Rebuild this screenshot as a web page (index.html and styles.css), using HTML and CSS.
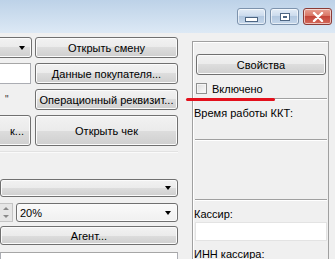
FILE: index.html
```html
<!DOCTYPE html>
<html lang="ru">
<head>
  <meta charset="UTF-8">
  <title>Тест драйвера ККТ</title>
  <link rel="stylesheet" href="styles.css">
</head>
<body>
  <div class="window">
    <!-- заголовок окна -->
    <div class="titlebar">
      <span class="wbtn min"><i></i></span>
      <span class="wbtn max"><i></i></span>
      <span class="wbtn close">
        <svg width="12" height="10" viewBox="0 0 12 10"><path d="M2 1 L10 9 M10 1 L2 9" stroke="#fff" stroke-width="2.4" stroke-linecap="round"/></svg>
      </span>
    </div>

    <div class="client">
      <div class="left">
        <div class="grid">
          <div class="cell"><div class="combo cut"><b class="arrow"></b></div></div>
          <button class="btn">Открыть смену</button>

          <div class="cell"><div class="input cut"></div></div>
          <button class="btn">Данные покупателя...</button>

          <div class="cell note">"</div>
          <button class="btn">Операционный реквизит...</button>

          <div class="cell"><button class="btn cut end">к...</button></div>
          <button class="btn">Открыть чек</button>
        </div>

        <div class="hline"></div>

        <div class="combo first"><b class="arrow"></b></div>
        <div class="row">
          <div class="spin"><b class="up"></b><b class="down"></b></div>
          <div class="combo light">20%<b class="arrow"></b></div>
        </div>
        <button class="btn agent">Агент...</button>
        <div class="input bottom"></div>
      </div>

      <div class="panel">
        <button class="btn props">Свойства</button>
        <label class="check"><span class="box"></span>Включено</label>
        <div class="sep"></div>
        <div class="label">Время работы ККТ:</div>
        <div class="sep gap1"></div>
        <div class="sep gap2"></div>
        <div class="label">Кассир:</div>
        <div class="input field"></div>
        <div class="label">ИНН кассира:</div>
      </div>
    </div>

    <div class="redline"></div>
  </div>
</body>
</html>
```

FILE: styles.css
```css
body {
  margin: 0;
  background: #f0f0f0;
  font-family: "Liberation Sans", Arial, sans-serif;
  font-size: 11px;
  color: #000;
  overflow: hidden;
}

.window {
  position: relative;
  width: 335px;
  height: 259px;
  overflow: hidden;
  background: #f0f0f0;
}

/* заголовок */
.titlebar {
  height: 33px;
  box-sizing: border-box;
  padding: 8px 3px 0 0;
  display: flex;
  justify-content: flex-end;
  gap: 4px;
  background: linear-gradient(#bdd2e8, #d3e2f1 70%, #dde9f5);
}

.wbtn {
  width: 29px;
  height: 17px;
  box-sizing: border-box;
  border: 1px solid #7d93ad;
  border-radius: 3px;
  display: flex;
  justify-content: center;
  align-items: center;
  background: linear-gradient(#e4edf7, #c9d9ec 50%, #b3c8e0 50%, #c4d6ea);
  box-shadow: inset 0 0 0 1px rgba(255,255,255,0.6);
}

.wbtn.min i {
  width: 11px;
  height: 3px;
  margin-top: 5px;
  background: #fff;
  border: 1px solid #4d6582;
}

.wbtn.max i {
  width: 8px;
  height: 6px;
  border: 1px solid #4d6582;
  background: #fff;
  box-shadow: inset 0 0 0 2px #fff, inset 0 0 0 3px #4d6582;
}

.wbtn.close {
  border-color: #8b3b36;
  background: linear-gradient(#e8a194, #d8705f 50%, #c4463a 50%, #d46a5b);
}

/* рабочая область */
.client {
  display: flex;
  padding-top: 4px;
}

.left {
  width: 178px;
  flex: none;
}

.grid {
  display: grid;
  grid-template-columns: 33px 143px;
  grid-template-rows: 21px 21px 21px 31px;
  column-gap: 2px;
  row-gap: 5px;
}

.cell {
  overflow: hidden;
  display: flex;
}

.btn {
  margin: 0;
  padding: 0;
  font: inherit;
  color: #000;
  border: 1px solid #707070;
  border-radius: 3px;
  background: linear-gradient(#f2f2f2, #ebebeb 50%, #dddddd 50%, #cfcfcf);
  box-shadow: inset 0 0 0 1px #fbfbfb;
  text-align: center;
  white-space: nowrap;
}

.btn.cut {
  width: 60px;
  margin-left: -29px;
  flex: none;
}

.btn.end {
  text-align: right;
  padding-right: 6px;
}

.combo {
  position: relative;
  box-sizing: border-box;
  height: 18px;
  border: 1px solid #707070;
  border-radius: 3px;
  background: linear-gradient(#f2f2f2, #ebebeb 50%, #dddddd 50%, #cfcfcf);
  box-shadow: inset 0 0 0 1px #fbfbfb;
  display: flex;
  align-items: center;
  padding-left: 3px;
}

.combo.cut {
  width: 60px;
  height: 21px;
  margin-left: -28px;
  flex: none;
}

.combo.first {
  margin-top: 26px;
}

.combo.light {
  flex: 1;
  height: 19px;
  background: linear-gradient(#fafafa, #f0f0f0);
}

.arrow {
  position: absolute;
  right: 6px;
  top: 50%;
  margin-top: -2px;
  border-left: 3.5px solid transparent;
  border-right: 3.5px solid transparent;
  border-top: 4px solid #000;
}

.input {
  box-sizing: border-box;
  background: #fff;
  border: 1px solid #abadb3;
  border-top-color: #a6a6a6;
}

.input.cut {
  width: 60px;
  margin-left: -29px;
  flex: none;
}

.note {
  padding: 5px 0 0 5px;
  font-size: 10px;
  color: #333;
}

.hline {
  height: 1px;
  margin-top: 5px;
  background: #e2e2e2;
  border-bottom: 1px solid #fafafa;
}

.row {
  display: flex;
  align-items: center;
  gap: 3px;
  margin-top: 6px;
}

.spin {
  width: 12px;
  height: 17px;
  display: flex;
  flex-direction: column;
  justify-content: space-around;
  align-items: center;
  background: #e6e6e6;
  border: 1px solid #c4c4c4;
  border-left: none;
}

.spin .up {
  border-left: 3px solid transparent;
  border-right: 3px solid transparent;
  border-bottom: 3px solid #8a8a8a;
}

.spin .down {
  border-left: 3px solid transparent;
  border-right: 3px solid transparent;
  border-top: 3px solid #8a8a8a;
}

.btn.agent {
  display: block;
  width: 100%;
  height: 19px;
  margin-top: 4px;
}

.input.bottom {
  height: 20px;
  margin-top: 7px;
}

/* правая панель */
.panel {
  width: 137px;
  height: 230px;
  margin: 4px 0 0 14px;
  flex: none;
  box-sizing: border-box;
  border: 1px solid #a0a0a0;
  box-shadow: inset 1px 1px #fff;
  padding: 12px 1px 0 1px;
  display: flex;
  flex-direction: column;
}

.btn.props {
  height: 21px;
  margin: 0 1px 0 2px;
}

.check {
  display: flex;
  align-items: center;
  gap: 5px;
  margin: 8px 0 0 2px;
  height: 11px;
}

.box {
  width: 11px;
  height: 11px;
  box-sizing: border-box;
  border: 1px solid #8e8f8f;
  background: linear-gradient(135deg, #dcdcdc, #fbfbfb);
  box-shadow: inset 0 0 0 1px #f4f4f4;
}

.sep {
  height: 1px;
  margin: 4px 0 0 1px;
  background: #a0a0a0;
  border-bottom: 1px solid #fff;
}

.sep.gap1 {
  margin-top: 19px;
}

.sep.gap2 {
  margin-top: 58px;
}

.label {
  margin-top: 7px;
  line-height: 13px;
}

.input.field {
  height: 19px;
  margin: 1px 0 0 1px;
  border-color: #e3e3e3;
}

.label + .input + .label {
  margin-top: 7px;
}

/* красная пометка поверх */
.redline {
  position: absolute;
  left: 186px;
  top: 98px;
  width: 89px;
  height: 3px;
  border-radius: 2px;
  background: #e3101c;
}
```
